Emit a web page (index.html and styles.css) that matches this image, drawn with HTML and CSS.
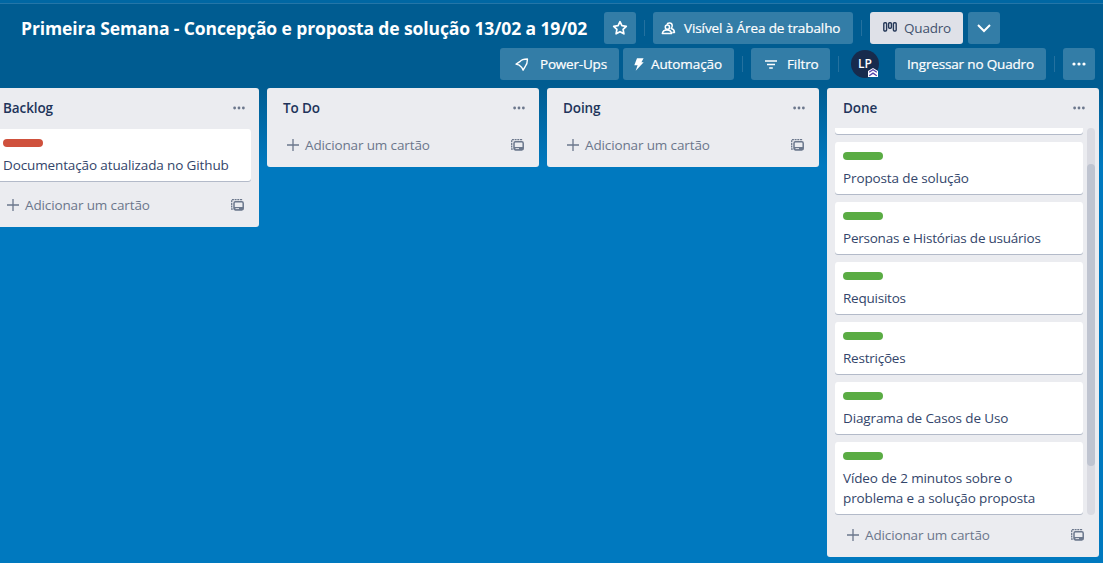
FILE: index.html
```html
<!DOCTYPE html>
<html lang="pt-BR">
<head>
<meta charset="utf-8">
<title>Primeira Semana</title>
<link rel="stylesheet" href="styles.css">
</head>
<body>
<svg class="defs" width="0" height="0">
  <symbol id="dots" viewBox="0 0 16 16"><circle cx="3" cy="8" r="1.6"/><circle cx="8" cy="8" r="1.6"/><circle cx="13" cy="8" r="1.6"/></symbol>
  <symbol id="plus" viewBox="0 0 12 12"><path d="M6 0v12M0 6h12" fill="none" stroke="currentColor" stroke-width="1.3"/></symbol>
  <symbol id="template" viewBox="0 0 13 12"><path d="M1.8 10.2H.7V.7h9.8v1" fill="none" stroke="currentColor" stroke-width="1.3" stroke-dasharray="2 .7"/><rect x="3" y="2.8" width="9.2" height="8.2" rx="1.4" fill="none" stroke="currentColor" stroke-width="1.5"/><path d="M3 8h9.2v3H3z"/><path d="M4.5 9.6h3.5" stroke="#ebecf0" stroke-width=".9"/></symbol>
</svg>
<div class="app">
  <div class="topbar"></div>
  <header class="header">
    <div class="row">
      <h1 class="title"><span>Primeira Semana - Concepção e proposta de solução 13/02 a 19/02</span></h1>
      <button class="btn square star"><svg width="16" height="16" viewBox="0 0 16 16"><path d="M8 1.7l1.9 4 4.4.6-3.2 3.1.8 4.4L8 11.7l-3.9 2.1.8-4.4L1.7 6.3l4.4-.6z" fill="none" stroke="currentColor" stroke-width="1.7" stroke-linejoin="round"/></svg></button>
      <i class="divider"></i>
      <button class="btn visibility"><svg width="15" height="13" viewBox="0 0 15 13"><g fill="none" stroke="currentColor" stroke-width="1.5" stroke-linejoin="round"><path d="M6 2.6C6.5.5 10.9.4 11.2 3.4c.1 1.4-.3 2.4-1 3.2 1.9.5 3.1 1.8 3.3 3.8h-2.2"/><circle cx="6.4" cy="5.2" r="2.1"/><path d="M1.3 11.6c.3-2.4 1.9-3.6 4.6-3.6s4.4 1.2 4.7 3.6z"/></g></svg><span>Visível à Área de trabalho</span></button>
      <i class="divider"></i>
      <button class="btn view"><svg width="14" height="10" viewBox="0 0 14 10"><g fill="none" stroke="currentColor" stroke-width="1.4"><rect x=".8" y=".8" width="2.8" height="8.2" rx="1"/><rect x="5.6" y=".8" width="2.8" height="5.4" rx="1"/><rect x="10.4" y=".8" width="2.8" height="8.2" rx="1"/></g></svg><span>Quadro</span></button>
      <button class="btn square chevron"><svg width="14" height="9" viewBox="0 0 14 9"><path d="M1 1l6 6 6-6" fill="none" stroke="currentColor" stroke-width="2"/></svg></button>
    </div>
    <div class="row second">
      <button class="btn powerups"><svg width="14" height="13" viewBox="0 0 14 13"><path d="M12.4 1C9 1 6.400 1.700 4.800 3.700L1.100 6.100 4.300 7.200 6.800 9.500 8.100 12.200 10.300 8.400C12 6.400 12.500 4 12.400 1z" fill="none" stroke="currentColor" stroke-width="1.4" stroke-linejoin="round"/></svg><span>Power-Ups</span></button>
      <button class="btn automation"><svg width="10" height="13" viewBox="0 0 10 13"><path d="M3 .2h6.6L7.4 4.3h2.3L1.700 12.800 3.600 7.200H.3z" fill="currentColor"/></svg><span>Automação</span></button>
      <i class="divider"></i>
      <button class="btn filter"><svg width="12" height="9" viewBox="0 0 12 9"><path d="M0 1h12M2 4.500h8M4.200 8h3.600" fill="none" stroke="currentColor" stroke-width="1.4"/></svg><span>Filtro</span></button>
      <i class="divider"></i>
      <div class="avatar">LP<svg class="badge" width="10" height="9" viewBox="0 0 10 9"><path d="M0 3L5 0l5 3v6H0z" fill="#fff"/><path d="M1.200 4.300L5 1.700l3.800 2.600M1.200 7.700L5 5.100l3.800 2.600" fill="none" stroke="#5243aa" stroke-width="1.3"/></svg></div>
      <button class="btn join"><span>Ingressar no Quadro</span></button>
      <i class="divider"></i>
      <button class="btn square"><svg width="16" height="16" fill="currentColor"><use href="#dots"/></svg></button>
    </div>
  </header>
  <main class="board">
    <section class="list">
      <div class="list-head"><h2>Backlog</h2><svg width="14" height="14"><use href="#dots"/></svg></div>
      <div class="cards">
        <article class="card wide"><i class="label red"></i><p>Documentação atualizada no Github</p></article>
      </div>
      <footer class="add"><svg width="12" height="12"><use href="#plus"/></svg><span>Adicionar um cartão</span><svg width="13" height="12"><use href="#template"/></svg></footer>
    </section>
    <section class="list">
      <div class="list-head"><h2>To Do</h2><svg width="14" height="14"><use href="#dots"/></svg></div>
      <footer class="add"><svg width="12" height="12"><use href="#plus"/></svg><span>Adicionar um cartão</span><svg width="13" height="12"><use href="#template"/></svg></footer>
    </section>
    <section class="list">
      <div class="list-head"><h2>Doing</h2><svg width="14" height="14"><use href="#dots"/></svg></div>
      <footer class="add"><svg width="12" height="12"><use href="#plus"/></svg><span>Adicionar um cartão</span><svg width="13" height="12"><use href="#template"/></svg></footer>
    </section>
    <section class="list">
      <div class="list-head"><h2>Done</h2><svg width="14" height="14"><use href="#dots"/></svg></div>
      <div class="scroller">
        <div class="cards">
          <article class="card cut"></article>
          <article class="card"><i class="label"></i><p>Proposta de solução</p></article>
          <article class="card"><i class="label"></i><p class="tight">Personas e Histórias de usuários</p></article>
          <article class="card"><i class="label"></i><p class="tight">Requisitos</p></article>
          <article class="card"><i class="label"></i><p class="tight">Restrições</p></article>
          <article class="card"><i class="label"></i><p>Diagrama de Casos de Uso</p></article>
          <article class="card"><i class="label"></i><p>Vídeo de 2 minutos sobre o<br>problema e a solução proposta</p></article>
        </div>
        <div class="track"><div class="thumb"></div></div>
      </div>
      <footer class="add"><svg width="12" height="12"><use href="#plus"/></svg><span>Adicionar um cartão</span><svg width="13" height="12"><use href="#template"/></svg></footer>
    </section>
  </main>
</div>
</body>
</html>
```

FILE: styles.css
```css
* { box-sizing: border-box; }
body { margin: 0; font: 13.5px/20px "Open Sans", "Noto Sans", sans-serif; color: #172b4d; }
h1, h2, p { margin: 0; }
svg { display: block; flex: none; }
.defs { position: absolute; }
.app { width: 1103px; height: 563px; overflow: hidden; background: #0079bf; display: flex; flex-direction: column; }
.topbar { height: 4px; flex: none; background: #0067a3; border-bottom: 1px solid #2476a8; }
.header { height: 82px; flex: none; padding: 8px 8px 0 21px; background: #005c91; color: #fff; }
.row { display: flex; height: 32px; align-items: center; }
.second { margin-top: 4px; justify-content: flex-end; }
.title { width: 583px; font-size: 17.5px; line-height: 32px; font-weight: 700; white-space: nowrap; letter-spacing: -.11px; }
.btn { height: 32px; padding: 0; border: 0; border-radius: 3px; background: #337da7; color: #fff; font: 13.5px/20px "Open Sans", "Noto Sans", sans-serif; letter-spacing: -.1px; display: flex; align-items: center; flex: none; white-space: nowrap; -webkit-text-stroke: .2px currentColor; }
.square { width: 32px; justify-content: center; }
.divider { width: 1px; height: 16px; margin: 0 8px; flex: none; background: #24719f; }
.visibility { width: 200px; padding-left: 8px; gap: 8px; }
.view { width: 93px; padding-left: 13px; gap: 7px; background: #dfe1e8; color: #42526e; margin-right: 5px; letter-spacing: -.2px; -webkit-text-stroke: 0; }
.view svg { color: #253858; margin-top: -3px; }
.powerups { width: 119px; padding-left: 15px; gap: 11px; margin-right: 4px; letter-spacing: -.2px; }
.automation { width: 111px; padding-left: 11px; gap: 7px; }
.filter { width: 79px; padding-left: 14px; gap: 10px; }
.avatar { position: relative; width: 28px; height: 28px; margin: 0 16px 0 4px; border-radius: 50%; background: #172b4d; font-size: 12px; line-height: 27px; font-weight: 600; text-align: center; }
.badge { position: absolute; right: 1px; bottom: 1px; }
.join { width: 151px; padding-left: 12px; letter-spacing: -.16px; }
.board { flex: 1; min-height: 0; display: flex; align-items: flex-start; gap: 8px; padding-top: 2px; margin-left: -13px; background: linear-gradient(#005c91, rgba(0,121,191,0) 80px); }
.list { width: 272px; flex: none; border-radius: 3px; background: #ebecf0; }
.list-head { height: 40px; padding: 0 13px 0 16px; display: flex; align-items: center; justify-content: space-between; fill: #6b778c; }
h2 { font-size: 13.5px; line-height: 20px; font-weight: 600; letter-spacing: -.1px; color: #21345a; }
.cards { padding: 1px 8px 0; flex: 1; }
.card { width: 248px; min-height: 52px; margin-bottom: 8px; padding: 10px 8px 6px; border-radius: 3px; background: #fff; box-shadow: 0 1px 0 #b3bac9; }
.card.wide { width: 256px; margin-bottom: 7px; }
.label { display: block; width: 40px; height: 8px; border-radius: 4px; background: #5aac44; margin-bottom: 8px; }
.red { background: #cf513d; }
.card p { line-height: 20px; color: #33456a; white-space: nowrap; letter-spacing: -.12px; }
.card p.tight { letter-spacing: -.23px; }
.card.cut { min-height: 0; height: 6px; padding: 0; border-radius: 0 0 3px 3px; }
.scroller { display: flex; height: 387px; overflow: hidden; }
.scroller .cards { padding-top: 0; padding-right: 4px; }
.track { width: 8px; flex: none; height: 387px; margin-right: 4px; border-radius: 4px; background: #dadbe2; padding-top: 36px; }
.thumb { height: 302px; border-radius: 4px; background: #bfc4d0; }
.add { height: 39px; padding: 0 15px 5px 20px; display: flex; align-items: center; color: #6b778c; fill: #6b778c; }
.add span { margin-left: 6px; flex: 1; letter-spacing: -.13px; }
.scroller + .add { height: 42px; padding-bottom: 2px; }
.cards + .add { padding-bottom: 6px; }
```
